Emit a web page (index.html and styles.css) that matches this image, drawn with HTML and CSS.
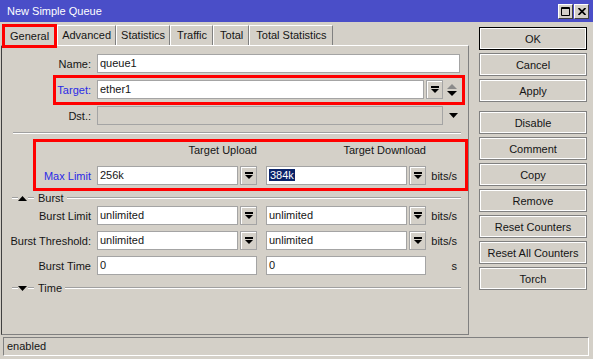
FILE: index.html
```html
<!DOCTYPE html>
<html lang="en">

<head>
    <meta charset="UTF-8">
    <meta name="viewport" content="width=device-width, initial-scale=1.0">
    <link rel="stylesheet" href="styles.css">
    <title>New Simple Queue</title>
</head>

<body>
    <div class="window">
        <div class="titlebar">
            <span class="title">New Simple Queue</span>
            <div class="wbtn">
                <svg width="9" height="9" viewBox="0 0 9 9"><path d="M0.5 0.5h8v8h-8z" fill="none" stroke="#000"/><path d="M0 1.5h9" stroke="#000"/></svg>
            </div>
            <div class="wbtn">
                <svg width="8" height="7" viewBox="0 0 8 7"><path d="M0.5 0L7.5 7M7.5 0L0.5 7" stroke="#000" stroke-width="1.7"/></svg>
            </div>
        </div>

        <div class="main">
            <div class="left">
                <div class="tabs">
                    <div class="tab selected">General</div>
                    <div class="tab">Advanced</div>
                    <div class="tab">Statistics</div>
                    <div class="tab wide">Traffic</div>
                    <div class="tab wide">Total</div>
                    <div class="tab wide">Total Statistics</div>
                </div>

                <div class="panel">
                    <div class="row first">
                        <div class="lbl">Name:</div>
                        <div class="field w-name">queue1</div>
                    </div>
                    <div class="row">
                        <div class="lbl blue">Target:</div>
                        <div class="field w-target">ether1</div>
                        <div class="dd"><svg width="8" height="8" viewBox="0 0 8 8"><rect width="8" height="2"/><path d="M0 3h8l-4 4z"/></svg></div>
                        <svg class="updown" width="10" height="12" viewBox="0 0 10 12"><path d="M0 5L5 0L10 5z" fill="#8a8a8a"/><path d="M0 7h10L5 12z" fill="#000"/></svg>
                    </div>
                    <div class="row">
                        <div class="lbl">Dst.:</div>
                        <div class="field disabled w-dst"></div>
                        <svg class="down" width="9" height="5" viewBox="0 0 9 5"><path d="M0 0h9L4.5 5z"/></svg>
                    </div>

                    <div class="etch sep"></div>

                    <div class="heads">
                        <div class="head">Target Upload</div>
                        <div class="head">Target Download</div>
                    </div>
                    <div class="row max">
                        <div class="lbl blue">Max Limit</div>
                        <div class="combo">
                            <div class="field">256k</div>
                            <div class="dd"><svg width="8" height="8" viewBox="0 0 8 8"><rect width="8" height="2"/><path d="M0 3h8l-4 4z"/></svg></div>
                        </div>
                        <div class="combo colb">
                            <div class="field"><span class="sel">384k</span></div>
                            <div class="dd"><svg width="8" height="8" viewBox="0 0 8 8"><rect width="8" height="2"/><path d="M0 3h8l-4 4z"/></svg></div>
                        </div>
                        <div class="unit">bits/s</div>
                    </div>

                    <div class="section">
                        <div class="etch dash"></div>
                        <svg width="9" height="5" viewBox="0 0 9 5"><path d="M0 5h9L4.5 0z"/></svg>
                        <div class="etch dash"></div>
                        <span class="stitle">Burst</span>
                        <div class="etch grow"></div>
                    </div>
                    <div class="row burst">
                        <div class="lbl">Burst Limit</div>
                        <div class="combo">
                            <div class="field">unlimited</div>
                            <div class="dd"><svg width="8" height="8" viewBox="0 0 8 8"><rect width="8" height="2"/><path d="M0 3h8l-4 4z"/></svg></div>
                        </div>
                        <div class="combo colb">
                            <div class="field">unlimited</div>
                            <div class="dd"><svg width="8" height="8" viewBox="0 0 8 8"><rect width="8" height="2"/><path d="M0 3h8l-4 4z"/></svg></div>
                        </div>
                        <div class="unit">bits/s</div>
                    </div>
                    <div class="row burst">
                        <div class="lbl">Burst Threshold:</div>
                        <div class="combo">
                            <div class="field">unlimited</div>
                            <div class="dd"><svg width="8" height="8" viewBox="0 0 8 8"><rect width="8" height="2"/><path d="M0 3h8l-4 4z"/></svg></div>
                        </div>
                        <div class="combo colb">
                            <div class="field">unlimited</div>
                            <div class="dd"><svg width="8" height="8" viewBox="0 0 8 8"><rect width="8" height="2"/><path d="M0 3h8l-4 4z"/></svg></div>
                        </div>
                        <div class="unit">bits/s</div>
                    </div>
                    <div class="row burst">
                        <div class="lbl">Burst Time</div>
                        <div class="field w-time">0</div>
                        <div class="field w-time colb">0</div>
                        <div class="unit">s</div>
                    </div>

                    <div class="section">
                        <div class="etch dash"></div>
                        <svg width="9" height="5" viewBox="0 0 9 5"><path d="M0 0h9L4.5 5z"/></svg>
                        <div class="etch dash"></div>
                        <span class="stitle">Time</span>
                        <div class="etch grow"></div>
                    </div>

                    <div class="mark mark-target"></div>
                    <div class="mark mark-max"></div>
                </div>
            </div>

            <div class="right">
                <div class="btn default">OK</div>
                <div class="btn">Cancel</div>
                <div class="btn">Apply</div>
                <div class="btn spaced">Disable</div>
                <div class="btn">Comment</div>
                <div class="btn">Copy</div>
                <div class="btn">Remove</div>
                <div class="btn">Reset Counters</div>
                <div class="btn">Reset All Counters</div>
                <div class="btn">Torch</div>
            </div>
        </div>

        <div class="status">enabled</div>
    </div>
</body>

</html>
```

FILE: styles.css
```css
* {
    margin: 0;
    padding: 0;
    box-sizing: border-box;
}

body {
    background: #d4d0c8;
    font-family: "Liberation Sans", Arial, sans-serif;
    font-size: 11px;
    color: #151515;
}

.window {
    width: 593px;
    height: 359px;
    display: flex;
    flex-direction: column;
}

/* title bar */
.titlebar {
    height: 22px;
    background: #4a4ec8;
    color: #fff;
    display: flex;
    align-items: center;
    padding: 0 4px 0 7px;
}

.title {
    flex: 1;
}

.wbtn {
    width: 15px;
    height: 15px;
    margin-left: 1px;
    background: #d4d0c8;
    border: 1px solid;
    border-color: #fff #404040 #404040 #fff;
    display: flex;
    align-items: center;
    justify-content: center;
}

.main {
    display: flex;
    margin-top: 3px;
    height: 310px;
}

.left {
    width: 468px;
    margin-left: 1px;
}

/* tabs */
.tabs {
    display: flex;
    align-items: flex-start;
    height: 20px;
    padding-left: 1px;
}

.tab {
    height: 20px;
    line-height: 19px;
    padding: 0 4px;
    border-top: 1px solid #fff;
    border-left: 1px solid #fff;
    border-right: 1px solid #808080;
    white-space: nowrap;
}

.tab.wide {
    padding: 0 5px 0 6px;
}

.tab.selected {
    height: 24px;
    margin-top: -1px;
    line-height: 19px;
    padding: 0 5px;
    border: 3px solid #f00;
    background: #d4d0c8;
    position: relative;
    z-index: 1;
}

/* form panel */
.panel {
    position: relative;
    height: 290px;
    border: 1px solid;
    border-color: #fff #808080 #808080 #404040;
}

.row {
    display: flex;
    align-items: center;
    height: 19px;
    margin-top: 7px;
}

.row.first {
    margin-top: 8px;
}

.row.max {
    margin-top: 8px;
}

.row.burst {
    margin-top: 6px;
}

.section + .row.burst {
    margin-top: 1px;
}

.lbl {
    width: 91px;
    margin-right: 4px;
    padding-right: 2px;
    text-align: right;
    white-space: nowrap;
}

.blue {
    color: #2a2ae6;
}

.field {
    height: 19px;
    line-height: 17px;
    padding-left: 2px;
    background: #fff;
    border: 1px solid #a4a4a4;
    white-space: nowrap;
    overflow: hidden;
}

.field.disabled {
    background: #d4d0c8;
}

.w-name {
    width: 363px;
}

.w-target {
    width: 327px;
}

.w-dst {
    width: 346px;
}

.w-time {
    width: 160px;
}

.combo {
    display: flex;
    width: 160px;
}

.combo .field {
    flex: 1;
}

.colb {
    margin-left: 9px;
}

.dd {
    width: 17px;
    height: 19px;
    margin-left: 2px;
    border: 1px solid #a4a4a4;
    box-shadow: inset 1px 1px #fff;
    display: flex;
    align-items: center;
    justify-content: center;
}

.updown {
    margin-left: 4px;
}

.down {
    margin-left: 6px;
}

.unit {
    width: 26px;
    margin-left: 5px;
    text-align: right;
}

.sel {
    background: #0a246a;
    color: #fff;
    padding: 0 1px;
}

.heads {
    display: flex;
    height: 14px;
    margin-top: 10px;
    padding-left: 95px;
}

.head {
    width: 160px;
    text-align: right;
}

.head + .head {
    margin-left: 9px;
}

.etch {
    height: 2px;
    border-top: 1px solid #a0a0a0;
    border-bottom: 1px solid #fff;
}

.sep {
    margin: 7px 7px 0 11px;
}

.section {
    display: flex;
    align-items: center;
    height: 14px;
    margin-top: 6px;
    padding: 0 7px 0 10px;
}

.section svg {
    margin-right: 1px;
}

.dash {
    width: 6px;
}

.stitle {
    margin-left: 4px;
}

.etch.grow {
    flex: 1;
    margin-left: 3px;
}

/* red highlight marks */
.mark {
    position: absolute;
    border: 3px solid #f00;
}

.mark-target {
    left: 51px;
    top: 29px;
    width: 412px;
    height: 30px;
}

.mark-max {
    left: 31px;
    top: 93px;
    width: 435px;
    height: 52px;
}

/* buttons */
.right {
    width: 108px;
    margin-left: 10px;
    padding-top: 2px;
    display: flex;
    flex-direction: column;
    gap: 3px;
}

.btn {
    height: 23px;
    border: 1px solid #808080;
    box-shadow: inset 0 0 0 1px #fff;
    display: flex;
    align-items: center;
    justify-content: center;
}

.btn.default {
    border-color: #000;
}

.btn.spaced {
    margin-top: 6px;
}

.status {
    height: 19px;
    margin: 2px 4px 0 3px;
    padding-left: 3px;
    line-height: 17px;
    border: 1px solid;
    border-color: #808080 #fff #fff #808080;
}
```
